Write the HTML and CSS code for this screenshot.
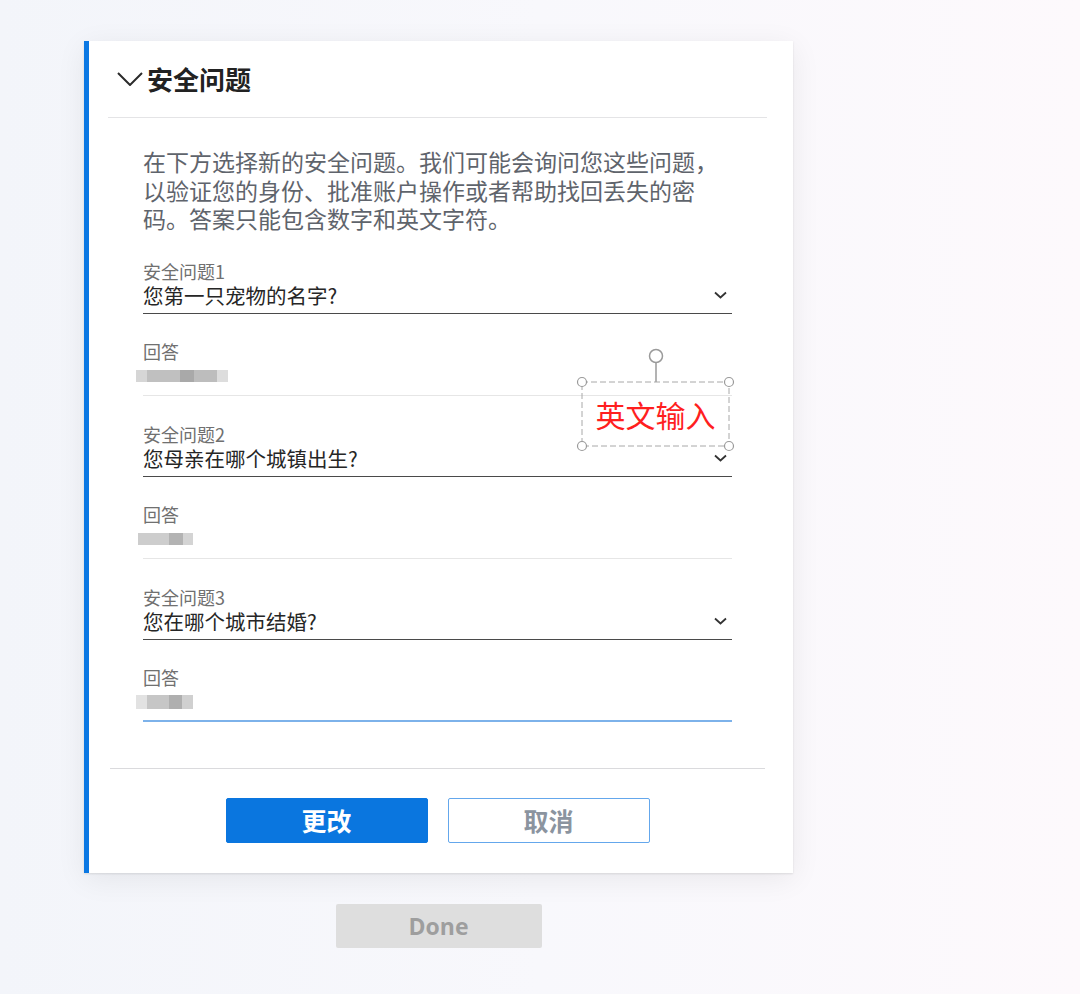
FILE: index.html
```html
<!DOCTYPE html>
<html lang="zh-CN">
<head>
  <meta charset="UTF-8">
  <meta name="viewport" content="width=device-width, initial-scale=1.0">
  <title>安全问题</title>
  <link rel="stylesheet" href="styles.css">
</head>
<body>

<div class="page">
  <div class="column">

    <!-- Security questions card -->
    <section class="card">
      <header class="card-head">
        <svg class="head-chevron" width="26" height="14" viewBox="0 0 26 14">
          <path d="M1 1 L13 13 L25 1" fill="none" stroke="#2b2b2b" stroke-width="2"/>
        </svg>
        <h2 class="card-title">安全问题</h2>
      </header>

      <div class="card-body">
        <p class="intro">在下方选择新的安全问题。我们可能会询问您这些问题，以验证您的身份、批准账户操作或者帮助找回丢失的密码。答案只能包含数字和英文字符。</p>

        <div class="field">
          <div class="field-label">安全问题1</div>
          <div class="field-value">
            <span>您第一只宠物的名字?</span>
            <svg class="field-chevron" width="13" height="8" viewBox="0 0 13 8">
              <path d="M1 1.5 L6.5 6.5 L12 1.5" fill="none" stroke="#333" stroke-width="1.8"/>
            </svg>
          </div>
        </div>

        <div class="field answer">
          <div class="field-label">回答</div>
          <div class="field-value">
            <span class="mosaic mosaic-1"><i></i><i></i><i></i><i></i><i></i></span>
          </div>
        </div>

        <div class="field">
          <div class="field-label">安全问题2</div>
          <div class="field-value">
            <span>您母亲在哪个城镇出生?</span>
            <svg class="field-chevron" width="13" height="8" viewBox="0 0 13 8">
              <path d="M1 1.5 L6.5 6.5 L12 1.5" fill="none" stroke="#333" stroke-width="1.8"/>
            </svg>
          </div>
        </div>

        <div class="field answer">
          <div class="field-label">回答</div>
          <div class="field-value">
            <span class="mosaic mosaic-2"><i></i><i></i><i></i></span>
          </div>
        </div>

        <div class="field">
          <div class="field-label">安全问题3</div>
          <div class="field-value">
            <span>您在哪个城市结婚?</span>
            <svg class="field-chevron" width="13" height="8" viewBox="0 0 13 8">
              <path d="M1 1.5 L6.5 6.5 L12 1.5" fill="none" stroke="#333" stroke-width="1.8"/>
            </svg>
          </div>
        </div>

        <div class="field answer focused">
          <div class="field-label">回答</div>
          <div class="field-value">
            <span class="mosaic mosaic-3"><i></i><i></i><i></i><i></i></span>
          </div>
        </div>
      </div>

      <footer class="card-foot">
        <button class="btn btn-primary">更改</button>
        <button class="btn btn-secondary">取消</button>
      </footer>

      <!-- Annotation text box drawn over the form -->
      <div class="note">
        <svg width="164" height="106" viewBox="0 0 164 106">
          <line x1="82" y1="17" x2="82" y2="36" stroke="#9a9a9a" stroke-width="1.5"/>
          <circle cx="82" cy="10" r="6.5" fill="#fff" stroke="#9a9a9a" stroke-width="1.5"/>
          <rect x="8" y="36" width="147" height="64" fill="none" stroke="#a8a8a8" stroke-width="1" stroke-dasharray="6 3"/>
          <circle cx="8" cy="36" r="4.5" fill="#fff" stroke="#9a9a9a" stroke-width="1.2"/>
          <circle cx="155" cy="36" r="4.5" fill="#fff" stroke="#9a9a9a" stroke-width="1.2"/>
          <circle cx="8" cy="100" r="4.5" fill="#fff" stroke="#9a9a9a" stroke-width="1.2"/>
          <circle cx="155" cy="100" r="4.5" fill="#fff" stroke="#9a9a9a" stroke-width="1.2"/>
        </svg>
        <div class="note-text">英文输入</div>
      </div>
    </section>

    <button class="btn-done">Done</button>
  </div>
</div>

</body>
</html>
```

FILE: styles.css
```css
body {
  margin: 0;
  min-height: 100vh;
  font-family: "Noto Sans CJK SC", "Noto Sans", sans-serif;
  background: linear-gradient(90deg, #f3f5fa 0%, #f8f8fc 50%, #fdf9fc 100%);
}

.page {
  padding: 41px 0 0 84px;
}

.column {
  width: 709px;
  display: flex;
  flex-direction: column;
  align-items: center;
}

/* Card */
.card {
  position: relative;
  width: 100%;
  box-sizing: border-box;
  background: #fff;
  border-left: 5px solid #0b78e3;
  box-shadow: 0 1px 2px rgba(0, 0, 0, 0.10), 0 6px 28px rgba(0, 0, 0, 0.07);
}

.card-head {
  display: flex;
  align-items: center;
  height: 76px;
  margin: 0 26px 0 19px;
  padding-left: 9px;
  border-bottom: 1px solid #e4e4e6;
}

.card-title {
  margin: 0 0 0 4px;
  font-size: 26px;
  font-weight: 700;
  line-height: 1;
  color: #222;
}

.card-body {
  padding: 29px 61px 46px 54px;
}

.intro {
  margin: 0;
  max-width: 580px;
  font-size: 23px;
  line-height: 28.5px;
  color: #5f646c;
}

/* Form fields */
.field {
  margin-top: 27.5px;
  padding-bottom: 5px;
  border-bottom: 1px solid #4a4a4a;
}

.field-label {
  font-size: 18px;
  line-height: 22px;
  color: #707070;
}

.field-value {
  display: flex;
  align-items: center;
  justify-content: space-between;
  height: 26px;
  font-size: 20.5px;
  color: #262626;
}

.field-chevron {
  margin-right: 5px;
}

.answer {
  margin-top: 25.5px;
  border-bottom-color: #e6e6e6;
}

.answer .field-value {
  height: 28px;
}

.answer.focused {
  padding-bottom: 4px;
  border-bottom: 2px solid #7db2ea;
}

/* Blurred answer values */
.mosaic {
  display: inline-flex;
  margin-left: -7px;
  filter: blur(0.6px);
}

.mosaic i {
  display: block;
  height: 12px;
}

.mosaic-1 i:nth-child(1) { width: 11px; background: #d6d6d6; }
.mosaic-1 i:nth-child(2) { width: 33px; background: #c0c0c0; }
.mosaic-1 i:nth-child(3) { width: 14px; background: #a9a9a9; }
.mosaic-1 i:nth-child(4) { width: 23px; background: #bdbdbd; }
.mosaic-1 i:nth-child(5) { width: 11px; background: #dddddd; }

.mosaic-2 {
  margin-left: -5px;
}
.mosaic-2 i:nth-child(1) { width: 31px; background: #cdcdcd; }
.mosaic-2 i:nth-child(2) { width: 14px; background: #b3b3b3; }
.mosaic-2 i:nth-child(3) { width: 10px; background: #d4d4d4; }

.mosaic-3 i {
  height: 14px;
}
.mosaic-3 i:nth-child(1) { width: 11px; background: #e2e2e2; }
.mosaic-3 i:nth-child(2) { width: 22px; background: #c6c6c6; }
.mosaic-3 i:nth-child(3) { width: 13px; background: #afafaf; }
.mosaic-3 i:nth-child(4) { width: 11px; background: #d0d0d0; }

/* Footer buttons */
.card-foot {
  display: flex;
  justify-content: center;
  gap: 20px;
  margin: 0 28px 0 21px;
  padding: 29px 0 30px;
  border-top: 1px solid #dadadd;
}

.btn {
  width: 202px;
  height: 45px;
  box-sizing: border-box;
  padding: 0;
  border-radius: 2px;
  font-family: inherit;
  font-size: 25px;
  font-weight: 700;
  line-height: 1;
  cursor: pointer;
}

.btn-primary {
  background: #0a76df;
  border: 1px solid #0a76df;
  color: #fff;
}

.btn-secondary {
  background: #fff;
  border: 1px solid #64a7ec;
  color: #8b949f;
}

.btn-done {
  margin-top: 31px;
  width: 206px;
  height: 44px;
  border: 0;
  border-radius: 2px;
  background: #dedede;
  color: #9e9e9e;
  font-family: "Open Sans", sans-serif;
  font-size: 23px;
  font-weight: 700;
}

/* Annotation overlay */
.note {
  position: absolute;
  left: 485px;
  top: 305px;
  width: 164px;
  height: 106px;
}

.note svg {
  display: block;
}

.note-text {
  position: absolute;
  left: 8px;
  top: 36px;
  width: 147px;
  height: 64px;
  display: flex;
  align-items: center;
  justify-content: center;
  font-size: 30px;
  line-height: 1;
  color: #ff1f1f;
}
```
